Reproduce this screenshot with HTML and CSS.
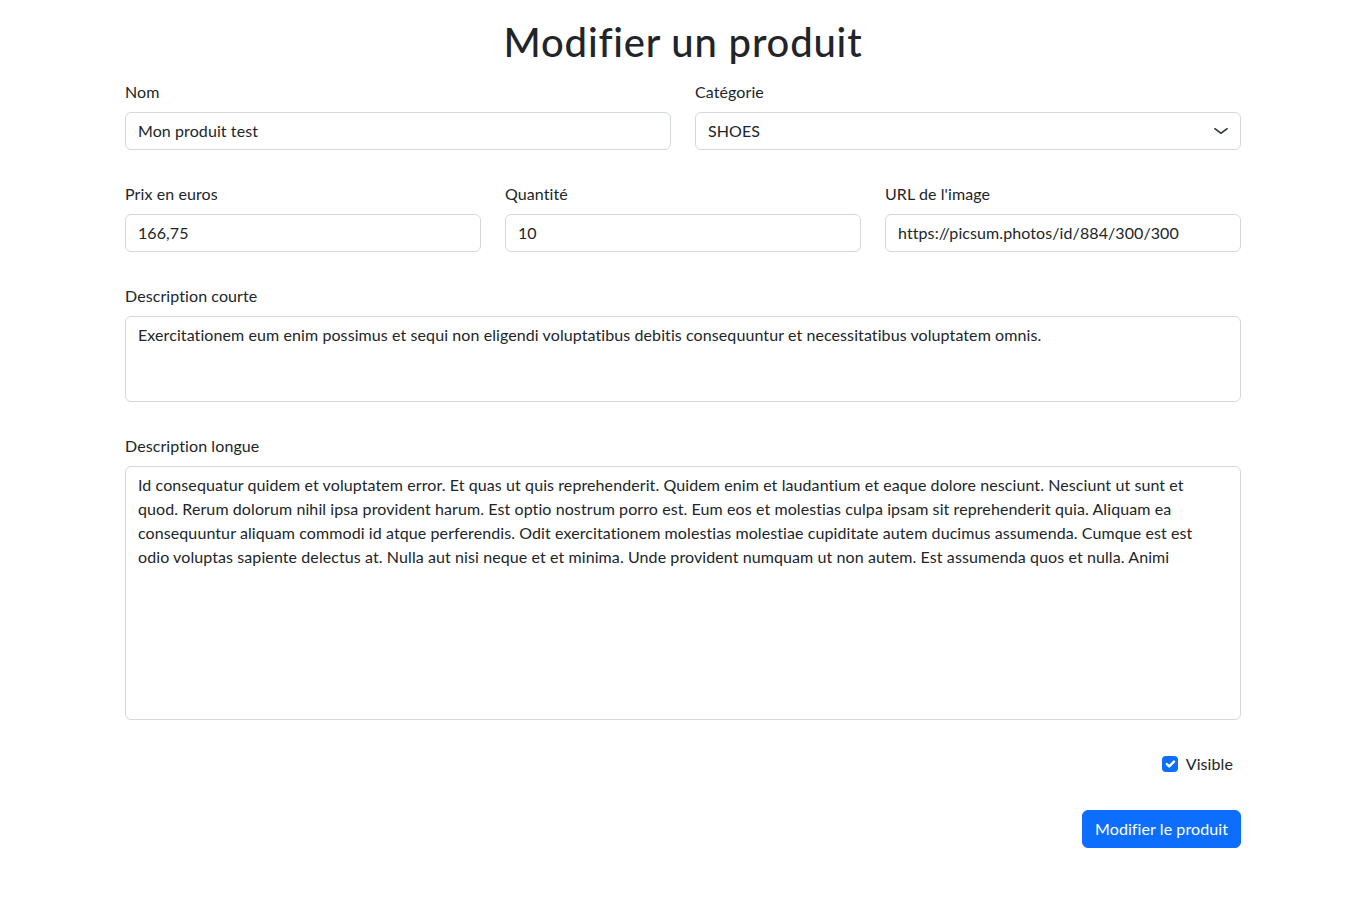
FILE: index.html
```html
<!DOCTYPE html>
<html lang="fr">
<head>
<meta charset="utf-8">
<title>Modifier un produit</title>
<link rel="stylesheet" href="styles.css">
</head>
<body>
<main class="container">
  <h1 class="title">Modifier un produit</h1>
  <form class="form">
    <div class="row row-2">
      <div class="field">
        <label class="label" for="nom">Nom</label>
        <input class="control" id="nom" type="text" value="Mon produit test">
      </div>
      <div class="field">
        <label class="label" for="cat">Catégorie</label>
        <div class="select-wrap">
          <select class="control select" id="cat">
            <option>SHOES</option>
          </select>
          <svg class="chevron" viewBox="0 0 16 16" width="16" height="12" preserveAspectRatio="none"><path fill="none" stroke="#343a40" stroke-linecap="round" stroke-linejoin="round" stroke-width="2" d="m2 5 6 6 6-6"/></svg>
        </div>
      </div>
    </div>
    <div class="row row-3">
      <div class="field">
        <label class="label" for="prix">Prix en euros</label>
        <input class="control" id="prix" type="text" value="166,75">
      </div>
      <div class="field">
        <label class="label" for="qte">Quantité</label>
        <input class="control" id="qte" type="text" value="10">
      </div>
      <div class="field">
        <label class="label" for="url">URL de l'image</label>
        <input class="control" id="url" type="text" value="https://picsum.photos/id/884/300/300">
      </div>
    </div>
    <div class="row">
      <div class="field">
        <label class="label" for="dc">Description courte</label>
        <textarea class="control area" id="dc" rows="3">Exercitationem eum enim possimus et sequi non eligendi voluptatibus debitis consequuntur et necessitatibus voluptatem omnis.</textarea>
      </div>
    </div>
    <div class="row">
      <div class="field">
        <label class="label" for="dl">Description longue</label>
        <textarea class="control area" id="dl" rows="10">Id consequatur quidem et voluptatem error. Et quas ut quis reprehenderit. Quidem enim et laudantium et eaque dolore nesciunt. Nesciunt ut sunt et quod. Rerum dolorum nihil ipsa provident harum. Est optio nostrum porro est. Eum eos et molestias culpa ipsam sit reprehenderit quia. Aliquam ea consequuntur aliquam commodi id atque perferendis. Odit exercitationem molestias molestiae cupiditate autem ducimus assumenda. Cumque est est odio voluptas sapiente delectus at. Nulla aut nisi neque et et minima. Unde provident numquam ut non autem. Est assumenda quos et nulla. Animi</textarea>
      </div>
    </div>
    <div class="check-row">
      <label class="check">
        <span class="checkbox"><svg viewBox="0 0 20 20" width="16" height="16"><path fill="none" stroke="#fff" stroke-linecap="round" stroke-linejoin="round" stroke-width="3" d="m6 10 3 3 6-6"/></svg></span>
        <span class="check-label">Visible</span>
      </label>
    </div>
    <div class="actions">
      <button class="btn" type="button">Modifier le produit</button>
    </div>
  </form>
</main>
</body>
</html>
```

FILE: styles.css
```css
* { box-sizing: border-box; }
html, body { margin: 0; padding: 0; background: #fff; }
body {
  font-family: "Lato", "Open Sans", sans-serif;
  font-size: 16px;
  line-height: 24px;
  letter-spacing: 0.09px;
  font-variant-ligatures: none;
  color: #212529;
}
.container {
  width: 1140px;
  margin: 0 auto;
  padding: 18px 12px 40px;
}
.title {
  margin: 0 0 14px;
  text-align: center;
  font-size: 40px;
  font-weight: 500;
  line-height: 48px;
  letter-spacing: 0.8px;
}
.form { display: flex; flex-direction: column; gap: 32px; }
.row { display: grid; grid-template-columns: 1fr; column-gap: 24px; }
.row-2 { grid-template-columns: 1fr 1fr; }
.row-3 { grid-template-columns: 1fr 1fr 1fr; }
.field { display: flex; flex-direction: column; }
.label { display: block; margin-bottom: 8px; }
.control {
  display: block;
  width: 100%;
  height: 38px;
  padding: 5px 12px 7px;
  font-family: inherit;
  font-size: 16px;
  line-height: 24px;
  letter-spacing: inherit;
  font-variant-ligatures: none;
  color: #212529;
  background: #fff;
  border: 1px solid #d3d8dd;
  border-radius: 6px;
  outline: none;
  appearance: none;
  -webkit-appearance: none;
}
.area { height: auto; resize: none; overflow: hidden; padding: 6px 12px; }
#dc { height: 86px; }
#dl { height: 254px; padding-right: 24px; }
.select-wrap { position: relative; }
.select { padding: 6px 36px 6px 12px; }
.chevron { position: absolute; right: 12px; top: 13px; pointer-events: none; }
.check-row { display: flex; justify-content: flex-end; padding-right: 8px; }
.check { display: flex; align-items: center; gap: 8px; }
.checkbox {
  width: 16px; height: 16px;
  border-radius: 4px;
  background: #0d6efd;
  display: flex;
  margin-left: 1px;
}
.actions { display: flex; justify-content: flex-end; margin-top: 2px; }
.btn {
  font-family: inherit;
  font-size: 16px;
  line-height: 24px;
  letter-spacing: inherit;
  padding: 6px 12px;
  height: 38px;
  color: #fff;
  background: #0d6efd;
  border: 1px solid #0d6efd;
  border-radius: 6px;
}
```
